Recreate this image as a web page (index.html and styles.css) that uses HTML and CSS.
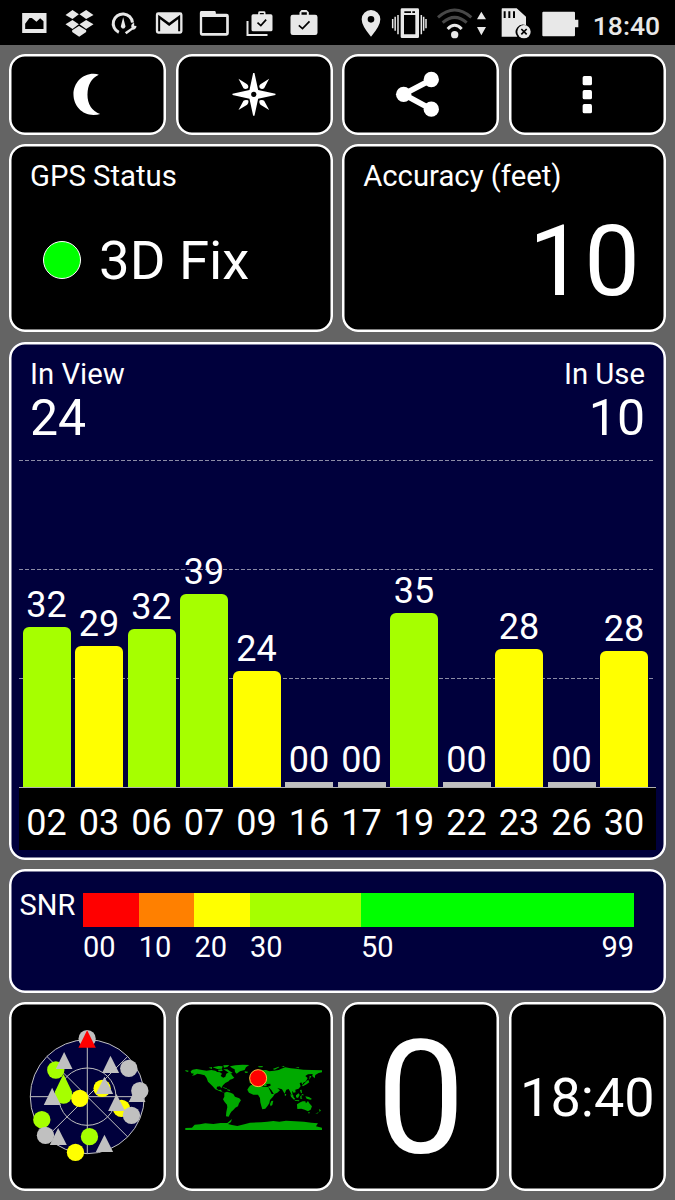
FILE: index.html
```html
<!DOCTYPE html>
<html lang="en">
<head>
    <meta charset="UTF-8">
    <title>GPS Test</title>
    <link rel="stylesheet" href="styles.css">
</head>

<body>
<div class="statusbar">
    <div class="notifications">
        <svg class="note" viewBox="34.5 0 135 135"><path fill-rule="evenodd" d="M65 39H138V99H65ZM74 87H129V64L119 55L108 65L94 54L87 54L74 71Z"/></svg>
        <svg class="note" viewBox="169.5 0 135 135"><path d="M216 30L235 43L216 57L195 45ZM257 30L279 45L257 57L237 43ZM195 73L216 60L235 73L216 87ZM237 73L257 60L279 73L257 87ZM215 91L235 78L236 78L257 91V96L236 110L215 96Z"/></svg>
        <svg class="note" viewBox="304.5 0 135 135">
            <path class="stroke" stroke-width="9" d="M355 97A29 29 0 1 1 396 68"/>
            <path d="M368 52L374 75A7 7 0 1 1 362 75ZM373 97L393 83A11 11 0 0 1 401 68V77L408 78A11 11 0 0 1 396 89L378 103Z"/>
        </svg>
        <svg class="note" viewBox="439.5 0 135 135"><path fill-rule="evenodd" d="M473 37H539Q546 37 546 44V94Q546 101 539 101H473Q466 101 466 94V44Q466 37 473 37ZM473 44V94H479V58L506 78L533 58V94H539V44L506 68Z"/></svg>
        <svg class="note" viewBox="574.5 0 135 135"><path fill-rule="evenodd" d="M602 33H643Q646 33 646 38V41H678Q685 41 685 48V100Q685 107 678 107H604Q598 107 598 100V39Q598 33 602 33ZM605 51V99H677V51Z"/></svg>
        <svg class="note" viewBox="709.5 0 135 135">
            <path fill-rule="evenodd" d="M773 43V38Q773 34 778 34H790Q795 34 795 38V43H811Q816 43 816 48V89Q816 94 811 94H758Q753 94 753 89V48Q753 43 758 43ZM778 43H790V39H778Z"/>
            <path class="stroke" stroke-width="6" d="M741 63V105H801"/>
            <path class="tick" d="M771 68L781 77L797 59"/>
        </svg>
        <svg class="note" viewBox="844.5 0 135 135">
            <path fill-rule="evenodd" d="M897 44V37L903 30H918L925 37V44H944Q951 44 951 51V98Q951 105 944 105H877Q870 105 870 98V51Q870 44 877 44ZM903 44H919V37H903Z"/>
            <path class="tick" d="M895 76L906 86L927 64"/>
        </svg>
    </div>
    <div class="system">
        <svg class="location" viewBox="45 0 100 135"><path fill-rule="evenodd" d="M93 30A28 28 0 0 1 121 58Q121 78 93 110Q65 78 65 58A28 28 0 0 1 93 30ZM93 48A10 10 0 1 0 93 68A10 10 0 1 0 93 48Z"/></svg>
        <svg class="vibrate" viewBox="145 0 130 135">
            <path fill-rule="evenodd" d="M187 25H234Q238 25 238 29V110Q238 114 234 114H187Q183 114 183 110V29Q183 25 187 25ZM193 45V103H227V45ZM194 34V39H214V34ZM218 34V39H226V34Z"/>
            <path class="stroke" stroke-width="4.500" d="M159 57V85M166.500 50V92M175 45V103M245 45V103M252 50V92M259 57V85"/>
        </svg>
        <svg class="wifi" viewBox="275 0 180 135">
            <path class="faint" d="M293 52Q343 8 393 52M307 68Q343 36 379 68"/>
            <path class="stroke" stroke-width="9" d="M322 87Q343 65 364 87"/>
            <circle cx="343" cy="104" r="11"/>
            <path d="M423 35L437 58H410ZM410 81H437L423 106Z"/>
        </svg>
        <svg class="sdcard" viewBox="455 0 135 135">
            <path fill-rule="evenodd" d="M486 25H529L557 50V76A22 22 0 0 0 531 110H484V29Q484 25 486 25ZM490 34V54H496V34ZM504 34V54H510V34ZM518 34V54H524V34Z"/>
            <circle cx="551" cy="95" r="20"/>
            <path class="tick" d="M543 87L559 103M559 87L543 103"/>
        </svg>
        <svg class="battery" viewBox="590 0 140 135"><path d="M609 35H701Q704 35 704 38V59H714V82H704V106Q704 109 701 109H609Q606 109 606 106V38Q606 35 609 35Z"/></svg>
        <span class="clock">18:40</span>
    </div>
</div>

<div class="board">
    <div class="panel">
        <svg class="fill" viewBox="27 27 471 243"><path d="M296 89Q262 105 262 149Q262 192 300 207Q292 210 280 210C245 210 220 182 220 148S246 86 280 86Q290 86 296 89Z"/></svg>
    </div>
    <div class="panel">
        <svg class="fill" viewBox="528 27 471 243">
            <path fill-rule="evenodd" d="M759 84H763L774 135L826 146V150L774 161L763 212H759L748 161L697 150V146L748 135ZM761 140A8 8 0 1 0 761 156A8 8 0 1 0 761 140Z"/>
            <path d="M715 101L741 118Q747 124 743 130Q736 134 730 130ZM807 101L792 130Q785 134 779 129Q775 122 781 118ZM715 195L730 167Q736 163 744 166Q747 172 741 179ZM807 195L781 179Q775 172 779 166Q787 163 792 167Z"/>
        </svg>
    </div>
    <div class="panel">
        <svg class="fill" viewBox="21.500 27 471 243">
            <path class="link" d="M289 104L206 148L289 193"/>
            <circle cx="289" cy="103.500" r="23"/><circle cx="206" cy="148" r="23"/><circle cx="289" cy="192.500" r="23"/>
        </svg>
    </div>
    <div class="panel">
        <svg class="fill" viewBox="521.500 27 471 243">
            <rect x="742" y="93" width="28" height="28" rx="5"/><rect x="742" y="135" width="28" height="28" rx="5"/><rect x="742" y="177" width="28" height="28" rx="5"/>
        </svg>
    </div>

    <div class="panel half fix">
        <div class="title">GPS Status</div>
        <div class="state"><span class="led"></span>3D Fix</div>
    </div>
    <div class="panel half accuracy">
        <div class="title">Accuracy (feet)</div>
        <div class="feet">10</div>
    </div>

    <div class="panel wide chart">
        <div class="counts">
            <div>In View<div class="count">24</div></div>
            <div class="right">In Use<div class="count">10</div></div>
        </div>
        <!-- bar heights follow the signal of each satellite -->
        <div class="plot">
            <div class="sat">32<div class="bar lime" style="height: 159.5px"></div></div>
            <div class="sat">29<div class="bar yellow" style="height: 141px"></div></div>
            <div class="sat">32<div class="bar lime" style="height: 157.5px"></div></div>
            <div class="sat">39<div class="bar lime" style="height: 193px"></div></div>
            <div class="sat">24<div class="bar yellow" style="height: 116px"></div></div>
            <div class="sat">00<div class="bar none"></div></div>
            <div class="sat">00<div class="bar none"></div></div>
            <div class="sat">35<div class="bar lime" style="height: 173.5px"></div></div>
            <div class="sat">00<div class="bar none"></div></div>
            <div class="sat">28<div class="bar yellow" style="height: 137.5px"></div></div>
            <div class="sat">00<div class="bar none"></div></div>
            <div class="sat">28<div class="bar yellow" style="height: 136px"></div></div>
        </div>
        <div class="ids">
            <span>02</span><span>03</span><span>06</span><span>07</span><span>09</span><span>16</span>
            <span>17</span><span>19</span><span>22</span><span>23</span><span>26</span><span>30</span>
        </div>
    </div>

    <div class="panel wide snr">
        <div class="snrname">SNR</div>
        <div class="scale">
            <div><div class="swatch red"></div>00</div>
            <div><div class="swatch orange"></div>10</div>
            <div><div class="swatch yellow"></div>20</div>
            <div><div class="swatch lime"></div>30</div>
            <div><div class="swatch green"></div><div class="ends"><span>50</span><span>99</span></div></div>
        </div>
    </div>

    <div class="panel">
        <svg class="fill sky" viewBox="13 6 471 567">
            <circle class="dome" cx="247.500" cy="290" r="171"/>
            <circle class="dome" cx="247.500" cy="290" r="86"/>
            <path class="grid" d="M76 290H419M247.500 119V461M126 169L369 411M369 169L126 411"/>
            <circle class="gray" cx="247" cy="116" r="26"/>
            <path class="redsat" d="M247 91L273 143H221Z"/>
            <circle class="limesat" cx="153" cy="210" r="26"/>
            <path class="gray" d="M178 156L203 207H153Z"/>
            <path class="gray" d="M317 167L343 219H292Z"/>
            <circle class="gray" cx="372" cy="205" r="26"/>
            <path class="gray" d="M397 255L422 306H372Z"/>
            <circle class="gray" cx="405" cy="272" r="26"/>
            <circle class="yellowsat" cx="292" cy="265" r="26"/>
            <path class="gray" d="M299 230L325 282H273Z"/>
            <circle class="limesat" cx="176" cy="285" r="26"/>
            <path class="limesat" d="M176 222L202 276H150Z"/>
            <circle class="yellowsat" cx="225" cy="295" r="26"/>
            <path class="gray" d="M142 263L168 315H117Z"/>
            <circle class="yellowsat" cx="350" cy="325" r="26"/>
            <path class="gray" d="M335 282L361 333H310Z"/>
            <circle class="gray" cx="380" cy="346" r="26"/>
            <circle class="limesat" cx="111" cy="359" r="26"/>
            <circle class="gray" cx="122" cy="406" r="26"/>
            <path class="gray" d="M160 384L186 435H135Z"/>
            <circle class="limesat" cx="254" cy="410" r="26"/>
            <circle class="yellowsat" cx="212" cy="457" r="26"/>
            <path class="gray" d="M299 404L325 456H273Z"/>
        </svg>
    </div>
    <div class="panel">
        <svg class="fill" viewBox="12.500 -114 471 567">
            <g class="land">
                <!-- americas -->
                <path d="M56 94L62 89L74 87L90 90L104 92L118 90L130 92L136 96L144 97L150 101L146 108L154 113L160 110L163 101L170 97L178 102L182 108L187 113L181 117L174 119L170 124L160 129L153 136L148 145L144 139L135 140L134 146L140 150L147 149L150 155L158 157L152 157L142 153L130 148L122 139L116 133L108 125L104 114L98 106L86 103L76 101L68 106L60 107L66 101L58 100Z"/>
                <path d="M157 158L165 155L176 158L184 162L189 170L202 175L207 181L201 190L198 199L190 203L184 210L178 215L174 222L170 230L162 229L163 216L166 202L165 194L158 186L153 178L157 170Z"/>
                <path d="M174 79L190 76L212 74L232 75L222 82L218 90L204 94L194 101L189 96L188 88L180 84Z"/>
                <path d="M122 82L140 78L152 79L150 86L136 87ZM154 76L172 75L166 81L156 83ZM154 88L166 88L174 94L182 98L176 101L166 95ZM138 89L150 88L152 93L140 94ZM110 83L120 81L120 87ZM152 141L164 145L166 148L155 144ZM166 148L175 150L173 153L166 151ZM40 90L50 92L48 96L41 94ZM218 94L228 95L226 99L219 98Z"/>
                <!-- europe and asia -->
                <path d="M233 129L234 121L244 120L243 113L248 110L257 104L260 97L270 91L282 90L292 94L306 92L320 90L328 86L340 82L356 85L372 86L394 89L420 90L450 91L450 97L440 99L430 105L428 115L421 108L422 102L408 103L400 108L407 114L402 124L394 128L391 134L388 127L383 130L386 139L380 146L370 149L371 157L365 158L360 152L362 164L366 169L361 170L355 156L350 147L343 149L338 161L330 148L316 144L324 151L316 158L306 163L298 150L288 140L296 137L295 131L283 132L284 138L276 138L270 129L268 137L263 133L256 126L247 127L241 132Z"/>
                <!-- africa -->
                <path d="M236 136L250 132L262 133L264 138L276 140L289 141L293 150L299 162L308 162L303 170L294 180L292 190L286 199L280 206L271 208L268 198L265 187L264 174L258 164L244 164L231 158L226 149L231 141Z"/>
                <path d="M298 183L304 182L301 195L296 199L294 193Z"/>
                <!-- islands -->
                <path d="M402 125L409 119L412 127L404 133L393 139L390 137ZM413 107L418 109L412 119ZM258 79L273 78L271 82L261 82ZM302 87L320 80L322 82L308 89ZM328 79L336 78L338 82ZM370 81L382 82L380 85ZM384 150L389 149L390 158L387 160ZM388 162L394 162L394 167ZM355 162L362 168L370 177L366 179L357 170ZM372 166L380 160L383 165L378 174L372 172ZM385 168L391 166L388 171L391 176L385 176ZM368 180L382 181L381 184L369 182ZM400 169L411 171L420 177L415 179L404 176ZM238 110L244 105L247 114L240 118ZM339 161L343 163L341 168L338 166Z"/>
                <path d="M375 193L385 187L392 184L400 184L402 190L408 183L412 190L420 199L416 209L408 214L398 209L388 206L376 207ZM408 217L414 217L411 221ZM441 207L447 211L443 216ZM440 216L438 220L430 222Z"/>
                <!-- antarctica -->
                <path d="M40 264L60 263L68 254L84 253L100 250L124 252L146 249L166 249L174 242L180 237L177 246L168 252L180 255L196 258L220 252L234 248L268 247L286 245L304 243L322 245L342 242L370 244L396 245L418 248L438 250L432 259L450 263V270H40Z"/>
            </g>
            <circle class="here" cx="258.500" cy="114.500" r="25.500"/>
        </svg>
    </div>
    <div class="panel speed">0</div>
    <div class="panel time">18:40</div>
</div>
</body>
</html>
```
FILE: styles.css
```css
body{
    margin: 0;
    background-color: #646464;
    color: white;
    font-family: Roboto, sans-serif;
}
svg{
    display: block;
    fill: white;
}
.statusbar{
    display: flex;
    height: 45px;
    background-color: black;
    padding-left: 11.5px;
    color: #e8e8e8;
}
.statusbar svg{
    height: 45px;
    fill: #e8e8e8;
}
.notifications{
    display: flex;
    width: 343.5px;
}
.note{
    width: 45px;
}
.system{
    display: flex;
}
.location{
    width: 33.33px;
}
.vibrate{
    width: 43.33px;
}
.wifi{
    width: 60px;
}
.sdcard{
    width: 45px;
}
.battery{
    width: 46.67px;
}
.clock{
    padding-left: 9.5px;
    font-size: 26.5px;
    font-weight: 500;
    line-height: 51px;
}
.stroke{
    fill: none;
    stroke: #e8e8e8;
}
.statusbar .stroke, .statusbar .faint, .statusbar .tick{
    fill: none;
}
.faint{
    stroke: #484848;
    stroke-width: 9;
}
.tick{
    stroke: black;
    stroke-width: 5;
}

/* board of panels */
.board{
    display: grid;
    grid-template-columns: repeat(4, 1fr);
    grid-template-rows: 81px 188px 518.5px 123.5px 189px;
    gap: 9.3px;
    padding: 9px 9px 0 9px;
}
.panel{
    background-color: black;
    border-radius: 16px;
    box-shadow: inset 0 0 0 2.5px white;
    box-sizing: border-box;
    min-width: 0;
}
.half{
    grid-column: span 2;
}
.wide{
    grid-column: span 4;
    background-color: #00003c;
}
.fill{
    width: 100%;
    height: 100%;
}
.link{
    fill: none;
    stroke: white;
    stroke-width: 17;
}

.fix, .accuracy{
    padding: 14px 21px;
}
.title{
    font-size: 29.3px;
    line-height: 37px;
}
.state{
    display: flex;
    align-items: center;
    margin-top: 35px;
    padding-left: 13px;
    font-size: 54.5px;
    line-height: 61px;
}
.led{
    box-sizing: border-box;
    width: 38px;
    height: 38px;
    margin-right: 18px;
    margin-bottom: 1px;
    border: 1px solid white;
    border-radius: 50%;
    background-color: #00ff00;
}
.feet{
    padding-right: 5px;
    font-size: 99px;
    line-height: 100px;
    margin-top: 16px;
    text-align: right;
}

/* satellites */
.chart{
    padding: 14px 10px 0 10px;
}
.counts{
    display: flex;
    justify-content: space-between;
    height: 104px;
    padding: 0 11px;
    font-size: 29.3px;
    line-height: 36px;
}
.count{
    font-size: 50px;
    line-height: 52px;
}
.right{
    text-align: right;
}
.plot{
    display: flex;
    align-items: flex-end;
    gap: 4.5px;
    height: 327px;
    padding-left: 3.5px;
    /* three dashed levels, drawn behind the bars */
    background-image: repeating-linear-gradient(90deg, #8c8ca6 0 4px, transparent 4px 6px),
        repeating-linear-gradient(90deg, #8c8ca6 0 4px, transparent 4px 6px),
        repeating-linear-gradient(90deg, #8c8ca6 0 4px, transparent 4px 6px);
    background-size: 635px 1px;
    background-position: 0 0, 0 109px, 0 218px;
    background-repeat: no-repeat;
}
.sat{
    width: 48px;
    font-size: 36px;
    line-height: 36px;
    text-align: center;
}
.bar{
    margin-top: 4px;
    border-radius: 6px 6px 0 0;
}
.none{
    height: 4.5px;
    border-radius: 0;
    background-color: #c0c0c0;
}
.red{
    background-color: #ff0000;
}
.orange{
    background-color: #ff8000;
}
.yellow{
    background-color: #ffff00;
}
.lime{
    background-color: #a6ff00;
}
.green{
    background-color: #00ff00;
}
.ids{
    display: flex;
    gap: 4.5px;
    box-sizing: border-box;
    height: 63px;
    padding-left: 3.5px;
    border-top: 1px solid #b0b0b0;
    background-color: black;
    font-size: 36px;
    line-height: 71px;
    text-align: center;
}
.ids span{
    width: 48px;
}

/* signal scale */
.snr{
    display: flex;
    padding: 23.5px 31px 0 10.5px;
    font-size: 29px;
}
.snrname{
    width: 63.5px;
    line-height: 25px;
}
.scale{
    display: grid;
    grid-template-columns: 55.7px 55.7px 55.7px 111px 273px;
    line-height: 40px;
}
.swatch{
    height: 34px;
}
.ends{
    display: flex;
    justify-content: space-between;
}

/* sky view */
.dome{
    fill: #00003c;
    stroke: #c0c0c0;
    stroke-width: 3;
}
.grid{
    stroke: #c0c0c0;
    stroke-width: 3;
}
.gray{
    fill: #c0c0c0;
}
.redsat{
    fill: #ff0000;
}
.limesat{
    fill: #a6ff00;
}
.yellowsat{
    fill: #ffff00;
}
.land{
    fill: #00aa00;
}
.here{
    fill: #ff0000;
    stroke: #ffc040;
    stroke-width: 3;
}
.speed{
    font-size: 158px;
    line-height: 193px;
    text-align: center;
}
.time{
    font-size: 54px;
    line-height: 191px;
    text-align: center;
}
```
